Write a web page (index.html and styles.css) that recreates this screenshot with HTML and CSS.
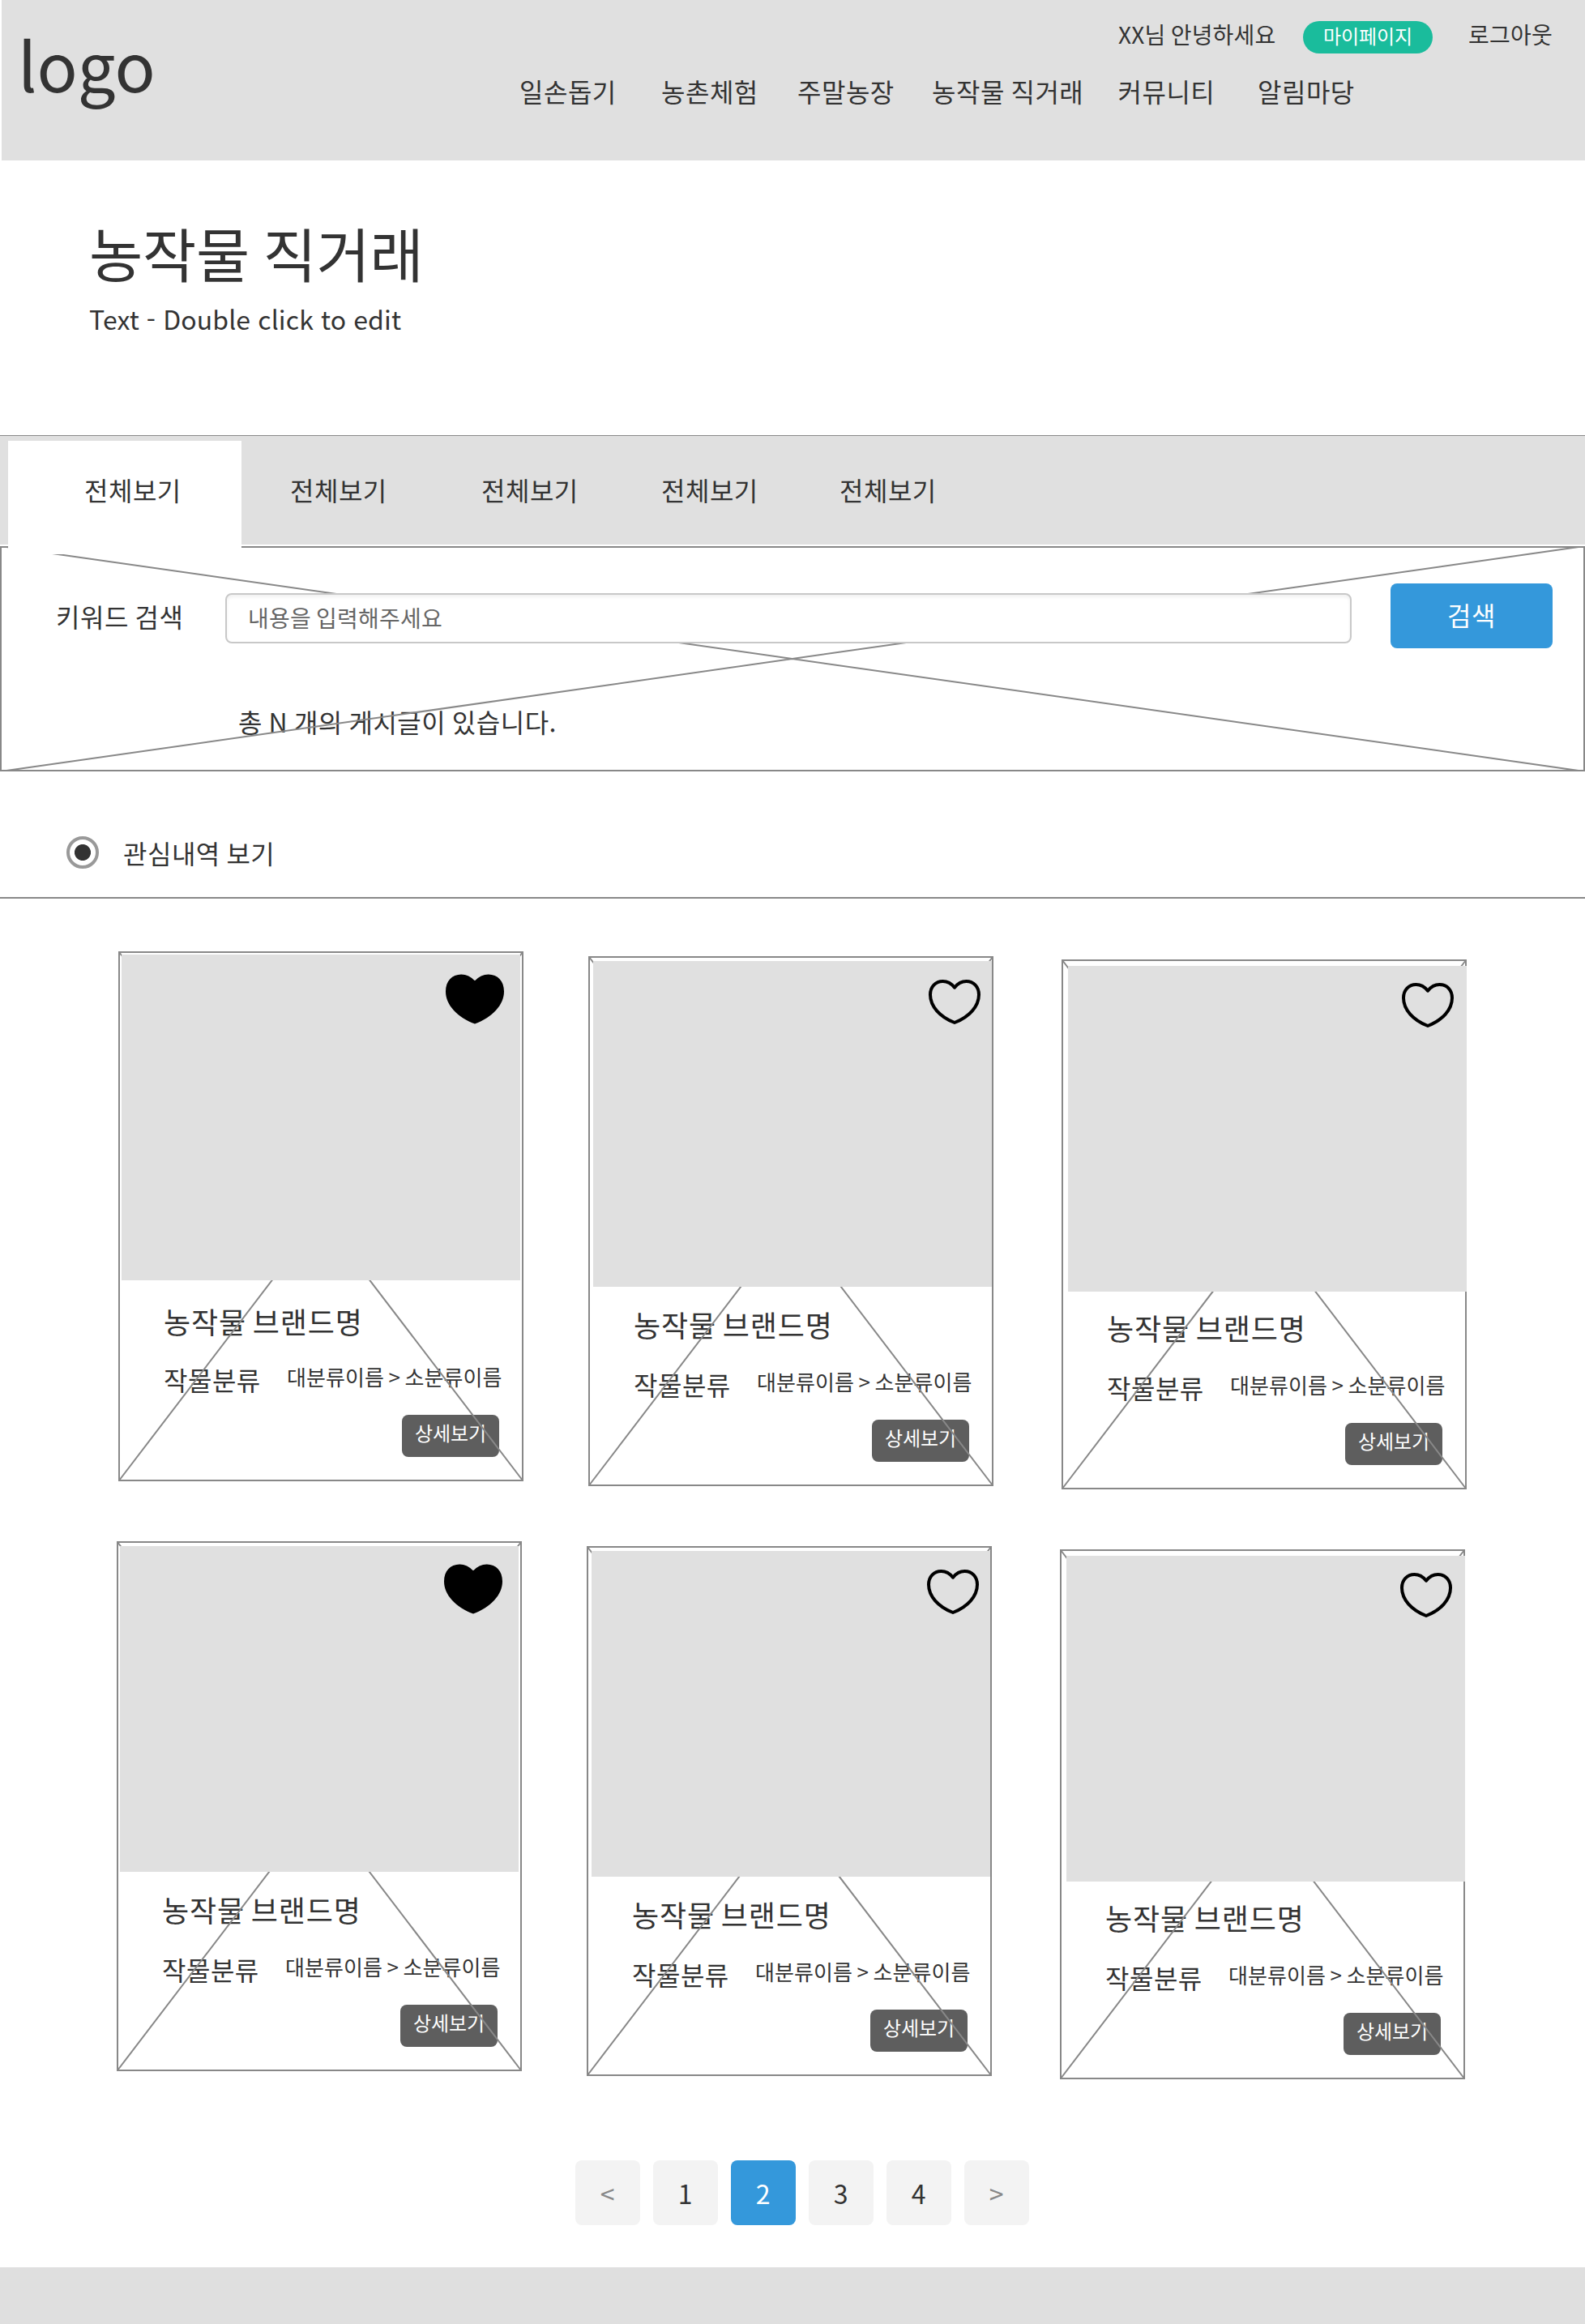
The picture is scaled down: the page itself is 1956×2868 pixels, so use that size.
FILE: index.html
```html
<!DOCTYPE html>
<html lang="ko">
<head>
<meta charset="utf-8">
<title>농작물 직거래</title>
<link rel="stylesheet" href="styles.css">
</head>
<body>
<svg width="0" height="0" class="defs" aria-hidden="true">
  <symbol id="heart" viewBox="-2 -2 64 55">
    <path d="M30 7.7C26 2.6 21.3 0 15.5 0 6.5 0 0 6.8 0 16.5 0 31 12 44 30 51 48 44 60 31 60 16.5 60 6.8 53.5 0 44.5 0 38.7 0 34 2.6 30 7.7Z"/>
  </symbol>
  <symbol id="heart-full" viewBox="0 0 60 51">
    <path d="M30 6.6C26 2.4 21.3 0 16 0 6.5 0 0 6.8 0 17.5 0 31.5 12 44 30 51 48 44 60 31.5 60 17.5 60 6.8 53.5 0 44 0 38.7 0 34 2.4 30 6.6Z"/>
  </symbol>
  <symbol id="frame" viewBox="0 0 500 654">
    <path d="M1 1H499V653H1ZM1 1L499 653M499 1L1 653" fill="none" stroke="#888" stroke-width="2"/>
  </symbol>
</svg>

<header class="header">
  <div class="logo">logo</div>
  <div class="header-main">
    <div class="utility">
      <span>XX님 안녕하세요</span>
      <a class="pill">마이페이지</a>
      <a>로그아웃</a>
    </div>
    <nav class="nav">
      <a>일손돕기</a><a>농촌체험</a><a>주말농장</a><a>농작물 직거래</a><a>커뮤니티</a><a>알림마당</a>
    </nav>
  </div>
</header>

<section class="hero">
  <h1>농작물 직거래</h1>
  <p>Text - Double click to edit</p>
</section>

<nav class="tabs">
  <a class="tab tab-active">전체보기</a><a class="tab">전체보기</a><a class="tab">전체보기</a><a class="tab">전체보기</a><a class="tab">전체보기</a>
</nav>

<section class="search">
  <svg class="search-frame" viewBox="0 0 1956 278"><path d="M1 1H1955V277H1ZM8 1L1948 277M1948 1L8 277" fill="none" stroke="#888" stroke-width="2"/></svg>
  <div class="search-row">
    <label>키워드 검색</label>
    <div class="field">내용을 입력해주세요</div>
    <a class="search-btn">검색</a>
  </div>
  <p class="count">총 N 개의 게시글이 있습니다.</p>
</section>

<section class="filter">
  <span class="radio"></span>
  <span>관심내역 보기</span>
</section>

<main class="cards">
  <article class="card card-a row-one">
    <svg class="card-frame"><use href="#frame"/></svg>
    <div class="media-slot"><div class="media"></div><svg class="like-full"><use href="#heart-full"/></svg></div>
    <h2>농작물 브랜드명</h2>
    <div class="meta"><span>작물분류</span><span class="path">대분류이름 &gt; 소분류이름</span></div>
    <a class="detail">상세보기</a>
  </article>
  <article class="card card-b row-one">
    <svg class="card-frame"><use href="#frame"/></svg>
    <div class="media-slot"><div class="media"></div><svg class="like"><use href="#heart"/></svg></div>
    <h2>농작물 브랜드명</h2>
    <div class="meta"><span>작물분류</span><span class="path">대분류이름 &gt; 소분류이름</span></div>
    <a class="detail">상세보기</a>
  </article>
  <article class="card card-c row-one">
    <svg class="card-frame"><use href="#frame"/></svg>
    <div class="media-slot"><div class="media"></div><svg class="like"><use href="#heart"/></svg></div>
    <h2>농작물 브랜드명</h2>
    <div class="meta"><span>작물분류</span><span class="path">대분류이름 &gt; 소분류이름</span></div>
    <a class="detail">상세보기</a>
  </article>
  <article class="card card-a">
    <svg class="card-frame"><use href="#frame"/></svg>
    <div class="media-slot"><div class="media"></div><svg class="like-full"><use href="#heart-full"/></svg></div>
    <h2>농작물 브랜드명</h2>
    <div class="meta"><span>작물분류</span><span class="path">대분류이름 &gt; 소분류이름</span></div>
    <a class="detail">상세보기</a>
  </article>
  <article class="card card-b">
    <svg class="card-frame"><use href="#frame"/></svg>
    <div class="media-slot"><div class="media"></div><svg class="like"><use href="#heart"/></svg></div>
    <h2>농작물 브랜드명</h2>
    <div class="meta"><span>작물분류</span><span class="path">대분류이름 &gt; 소분류이름</span></div>
    <a class="detail">상세보기</a>
  </article>
  <article class="card card-c">
    <svg class="card-frame"><use href="#frame"/></svg>
    <div class="media-slot"><div class="media"></div><svg class="like"><use href="#heart"/></svg></div>
    <h2>농작물 브랜드명</h2>
    <div class="meta"><span>작물분류</span><span class="path">대분류이름 &gt; 소분류이름</span></div>
    <a class="detail">상세보기</a>
  </article>
</main>

<nav class="pager">
  <a class="page step">&lt;</a><a class="page">1</a><a class="page current">2</a><a class="page">3</a><a class="page">4</a><a class="page step">&gt;</a>
</nav>

<footer class="footer"></footer>
</body>
</html>
```

FILE: styles.css
```css
* { box-sizing: border-box; margin: 0; padding: 0; }

body {
  width: 1956px;
  background: #fff;
  color: #333;
  font-family: "Noto Sans CJK KR", "Noto Sans", sans-serif;
  font-size: 32px;
  line-height: 40px;
  letter-spacing: 0.5px;
  word-spacing: -1.8px;
  white-space: nowrap;
}

h1, h2 { font-weight: 400; }
.defs { position: absolute; }

/* Header */
.header {
  display: flex;
  height: 198px;
  margin-left: 2px;
  padding-left: 20px;
  background: #e0e0e0;
}
.logo {
  width: 619px;
  padding-top: 18px;
  font-size: 83px;
  line-height: 120px;
  letter-spacing: 0;
}
.header-main { padding-top: 22px; }
.utility {
  display: grid;
  grid-template-columns: 228px 204px auto;
  height: 44px;
  margin-left: 739px;
  font-size: 28px;
  letter-spacing: 0.2px;
}
.pill {
  width: 160px;
  height: 40px;
  margin-top: 4px;
  border-radius: 20px;
  background: #1abc9c;
  color: #fff;
  font-size: 24px;
  line-height: 36px;
  letter-spacing: -0.08px;
  text-align: center;
}
.nav {
  display: grid;
  grid-template-columns: 175px 168px 166px 229.5px 172.5px auto;
  margin-top: 26px;
}

/* Page title */
.hero { height: 339px; padding: 61px 0 0 110px; }
.hero h1 { font-size: 72px; line-height: 104px; letter-spacing: -0.24px; word-spacing: -3.5px; }
.hero p { margin-top: 10px; letter-spacing: 0.1px; word-spacing: 0; }

/* Category tabs */
.tabs {
  display: grid;
  grid-template-columns: 288px 296px 222px 220px auto;
  height: 137px;
  padding: 6px 0 0 10px;
  border-top: 1px solid #888;
  background: linear-gradient(#e0e0e0 134px, #fff 134px);
}
.tab { padding-left: 60px; line-height: 120px; }
.tab:nth-child(n+3) { padding-left: 0; }
.tab-active {
  position: relative;
  z-index: 3;
  height: 140px;
  padding-left: 94px;
  background: #fff;
}

/* Keyword search */
.search { position: relative; height: 278px; padding: 46px 40px 0 69px; }
.search-frame { position: absolute; inset: 0; width: 1956px; height: 278px; z-index: 1; }
.search-row { display: flex; height: 80px; }
.search-row label { width: 209px; line-height: 80px; }
.field {
  position: relative;
  z-index: 2;
  width: 1390px;
  height: 62px;
  margin-top: 12px;
  padding-left: 26px;
  border: 2px solid #c8c8c8;
  border-radius: 8px;
  background: #fff;
  box-shadow: inset 0 3px 4px rgba(0, 0, 0, 0.06);
  color: #666;
  font-size: 28px;
  line-height: 57px;
  letter-spacing: 0.2px;
}
.search-btn {
  position: relative;
  z-index: 2;
  width: 200px;
  height: 80px;
  margin-left: 48px;
  border-radius: 8px;
  background: #3498db;
  color: #fff;
  line-height: 76px;
  text-align: center;
}
.count { margin: 70px 0 0 225px; }

/* Interest filter */
.filter {
  display: flex;
  align-items: center;
  gap: 30px;
  height: 157px;
  padding: 45px 0 0 82px;
  border-bottom: 2px solid #888;
}
.radio {
  width: 40px;
  height: 40px;
  border: 4px solid #999;
  border-radius: 50%;
  background: radial-gradient(circle, #333 9.6px, #fff 10.4px);
}

/* Product cards */
.cards {
  display: grid;
  grid-template-columns: 580px 584px 502px;
  grid-template-rows: 728px 664px;
  height: 1557px;
  padding: 65px 0 0 144px;
}
.card { position: relative; width: 500px; height: 654px; }
.row-one { margin-left: 2px; }
.card-frame { position: absolute; inset: 0; width: 500px; height: 654px; z-index: 1; }
.media-slot { position: relative; z-index: 2; height: 428px; padding: 6px; }
.media { width: 492px; height: 402px; background: #e0e0e0; }
.card-a .media-slot { padding: 6px 4px; }
.card-a.row-one .media-slot { height: 430px; padding: 4px; }
.card-a.row-one .meta { margin-top: 21px; }
.card-b { margin-top: 6px; }
.card-c { margin-top: 10px; }
.card-c .media-slot { padding: 8px 0 0 8px; }
.like {
  position: absolute;
  top: 29px;
  left: 420px;
  width: 64px;
  height: 55px;
  fill: none;
  stroke: #000;
  stroke-width: 4;
  stroke-linejoin: round;
}
.like-full { position: absolute; top: 28px; left: 404px; width: 72px; height: 62px; }
.card h2 { padding-left: 56px; font-size: 36px; line-height: 53px; letter-spacing: 0.84px; word-spacing: -3px; }
.meta {
  display: grid;
  grid-template-columns: 152px auto;
  height: 48px;
  margin: 23px 0 20px 56px;
  line-height: 48px;
}
.path { font-size: 26px; line-height: 42px; letter-spacing: 0.06px; }
.detail {
  display: block;
  width: 120px;
  height: 52px;
  margin-left: 350px;
  border-radius: 8px;
  background: #5e5e5e;
  color: #fff;
  font-size: 24px;
  line-height: 44px;
  letter-spacing: -0.08px;
  text-align: center;
}

/* Pagination */
.pager { display: flex; gap: 16px; height: 132px; padding-left: 710px; }
.page {
  width: 80px;
  height: 80px;
  border-radius: 8px;
  background: #f3f3f3;
  line-height: 80px;
  text-align: center;
}
.step { color: #888; }
.current { background: #3498db; color: #fff; }

.footer { height: 70px; background: #dfdfdf; }
```
